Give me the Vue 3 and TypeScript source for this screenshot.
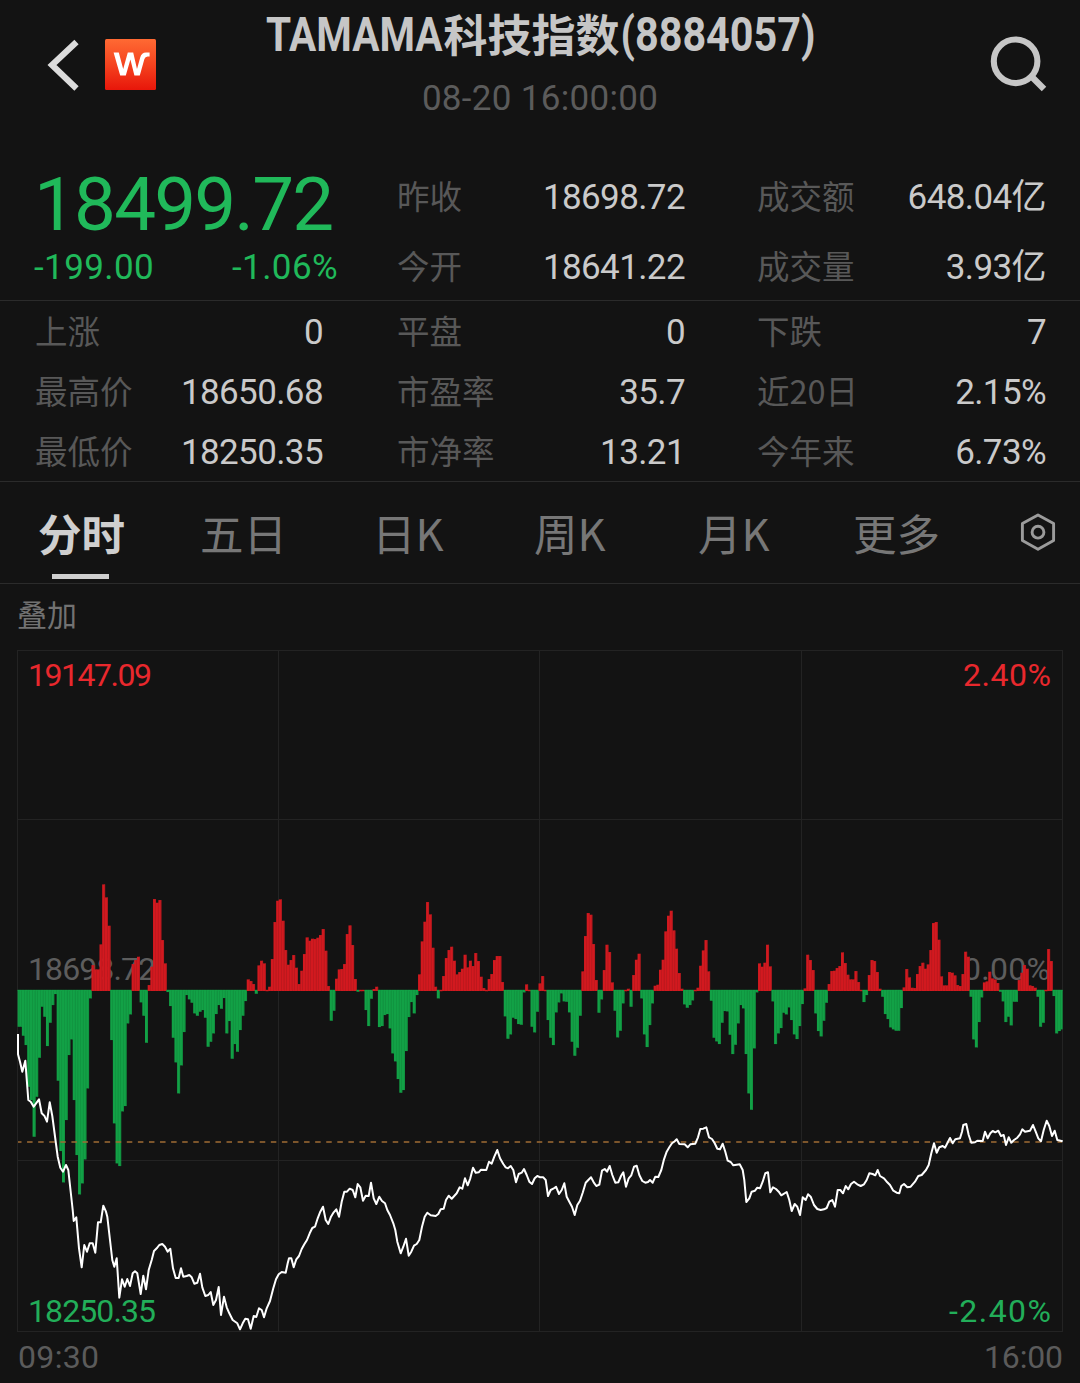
<script setup lang="ts">
interface Stat { label: string; value: string }
interface Bar { x: number; y: number; h: number; up: boolean }
interface Trace { x: number; y: number; pts: number[] }

const headStats: Stat[] = [
  { label: '昨收', value: '18698.72' },
  { label: '成交额', value: '648.04亿' },
  { label: '今开', value: '18641.22' },
  { label: '成交量', value: '3.93亿' },
]

const stats: Stat[] = [
  { label: '上涨', value: '0' },
  { label: '平盘', value: '0' },
  { label: '下跌', value: '7' },
  { label: '最高价', value: '18650.68' },
  { label: '市盈率', value: '35.7' },
  { label: '近20日', value: '2.15%' },
  { label: '最低价', value: '18250.35' },
  { label: '市净率', value: '13.21' },
  { label: '今年来', value: '6.73%' },
]

const tabs = ['分时', '五日', '日K', '周K', '月K', '更多']

// One level per minute, in thirds of a pixel, measured downwards from the given zero.
const levels: { zero: number; values: number[] }[] = [
  {
    zero: 361,
    values: [
      470, 470, 497, 525, 650, 690, 800, 680, 563, 410, 440, 528, 458, 405, 372, 632, 843, 937, 750, 555,
      508, 690, 855, 973, 940, 868, 655, 385, 285, 298, 298, 223, 43, 82, 167, 510, 760, 880, 888, 724,
      708, 460, 433, 282, 270, 260, 397, 437, 518, 345, 290, 87, 98, 90, 210, 280, 366, 408, 503, 577,
      670, 586, 486, 375, 388, 398, 430, 437, 425, 420, 443, 530, 515, 490, 432, 405, 416, 384, 490, 453,
      566, 522, 545, 480, 437, 393, 328, 333, 342, 371, 286, 272, 280, 361, 350, 267, 156, 92, 88, 152,
      240, 284, 270, 255, 293, 342, 302, 252, 202, 212, 206, 207, 203, 195, 177, 242, 348, 452, 422, 326,
      298, 297, 282, 192, 166, 225, 327, 365, 361, 361, 420, 468, 386, 357, 350, 471, 468, 435, 432, 475,
      550, 574, 627, 668, 660, 543, 441, 396, 430, 375, 313, 214, 155, 96, 133, 233, 350, 385, 361, 318,
      264, 240, 230, 272, 313, 306, 296, 254, 292, 272, 288, 249, 273, 320, 354, 361, 327, 312, 270, 258,
      258, 336, 439, 506, 493, 443, 447, 462, 464, 367, 343, 361, 470, 487, 425, 340, 318, 361, 450, 503,
      525, 427, 397, 370, 394, 395, 427, 515, 557, 533, 437, 304, 198, 129, 134, 222, 330, 428, 388, 300,
      224, 246, 337, 422, 502, 482, 400, 361, 356, 410, 315, 269, 251, 385, 493, 531, 465, 400, 347, 344,
      299, 269, 184, 137, 122, 181, 236, 309, 356, 403, 413, 405, 391, 361, 353, 287, 241, 210, 304, 392,
      503, 514, 522, 458, 423, 424, 494, 552, 524, 460, 405, 415, 552, 670, 719, 535, 367, 280, 290, 278,
      224, 289, 394, 522, 490, 474, 428, 433, 412, 450, 493, 507, 468, 402,
    ],
  },
  {
    zero: 271,
    values: [
      265, 164, 180, 210, 340, 393, 409, 362, 308, 252, 213, 212, 204, 198, 157, 189, 224, 238, 238, 213,
      246, 271, 306, 285, 225, 180, 183, 216, 266, 290, 342, 357, 382, 388, 392, 392, 324, 262, 207, 232,
      263, 264, 222, 198, 188, 206, 193, 150, 69, 66, 119, 229, 256, 256, 216, 218, 226, 255, 258, 222,
      155, 170, 290, 418, 442, 366, 292, 247, 244, 215, 235, 238, 249, 275, 304, 366, 350, 376, 305, 305,
      240, 218, 195, 206, 256, 258, 263, 290, 380, 368, 271, 147, 183, 288, 400, 393, 388,
    ],
  },
]

const PITCH = 2.677
const BASE = 990.4

const bars: Bar[] = levels
  .flatMap((part) => part.values.map((v) => (part.zero - v) / 3))
  .map((v, i) => ({
    x: 16.5 + PITCH * i,
    y: v >= 0 ? BASE - v : BASE,
    h: Math.max(Math.abs(v), 0.8),
    up: v >= 0,
  }))

const traces: Trace[] = [
  {
    x: 10, y: 870,
    pts: [24, 492, 24, 553, 30, 575, 37, 605, 46, 572, 55, 690, 62, 695, 71, 710, 87, 688, 95, 730, 103, 737, 111, 755, 119, 697, 127, 738, 138, 822, 143, 860, 151, 893, 159, 905, 168, 885, 175, 900],
  },
  {
    x: 10, y: 1180,
    pts: [188, 90, 191, 123, 199, 112, 207, 205, 215, 262, 223, 195, 231, 215, 239, 190, 248, 190, 256, 218, 264, 127, 272, 127, 280, 77, 288, 95, 292, 110, 300, 180, 307, 240, 313, 260, 320, 235, 328, 353, 336, 298, 344, 320, 352, 297, 360, 318, 368, 280, 375, 274, 382, 280, 392, 342, 400, 287, 408, 328, 416, 270, 425, 240, 432, 213, 440, 205, 448, 195, 457, 192, 465, 200, 473, 215, 481, 206, 489, 265, 497, 294, 506, 294, 513, 265, 520, 290, 530, 288, 538, 285, 545, 292, 553, 311, 562, 308, 570, 281, 577, 322, 586, 348, 595, 345, 602, 336, 610, 375, 618, 360, 626, 321, 633, 405, 642, 350, 650, 382, 658, 400, 668, 420, 682, 430, 690, 448, 698, 430, 706, 416, 714, 418, 722, 446, 731, 408, 739, 411, 747, 385, 755, 390, 762, 412, 770, 385, 780, 363, 790, 325, 798, 298, 806, 283, 815, 276, 827, 278, 833, 250],
  },
  {
    x: 270, y: 1100,
    pts: [57, 475, 64, 475, 71, 502, 79, 478, 87, 468, 95, 447, 103, 433, 111, 420, 119, 400, 127, 384, 135, 380, 143, 355, 151, 335, 159, 320, 167, 360, 175, 372, 183, 350, 191, 337, 199, 328, 207, 350, 215, 305, 223, 275, 231, 275, 239, 266, 248, 270, 256, 292, 263, 252, 271, 262, 279, 302, 287, 287, 296, 288, 303, 248, 311, 295, 319, 312, 328, 290, 336, 303, 345, 310, 352, 330, 360, 345, 370, 370, 376, 390, 382, 425, 392, 460, 400, 440, 408, 416, 416, 467, 424, 455, 432, 437, 440, 432, 448, 420, 456, 380, 464, 350, 472, 338, 482, 346, 497, 348, 505, 342, 512, 328, 521, 326, 528, 300, 536, 287, 545, 296, 560, 280, 569, 262, 577, 266, 585, 235, 593, 256, 601, 235, 609, 203, 617, 218, 626, 217, 633, 209, 649, 210, 657, 185, 665, 191, 673, 170, 682, 150, 690, 175, 700, 192, 707, 202, 714, 205, 722, 198, 730, 210, 738, 247, 746, 222, 755, 218, 762, 207, 770, 225, 778, 245, 786, 252, 794, 235, 802, 228, 811, 232, 820, 232, 827, 240],
  },
  {
    x: 540, y: 1100,
    pts: [24, 288, 32, 270, 40, 266, 48, 260, 57, 282, 65, 270, 73, 250, 80, 290, 88, 305, 96, 320, 104, 345, 112, 315, 120, 302, 128, 278, 137, 248, 145, 240, 153, 232, 161, 247, 169, 258, 178, 254, 186, 212, 194, 207, 201, 215, 209, 198, 217, 225, 226, 248, 235, 247, 243, 228, 250, 217, 258, 260, 266, 235, 274, 226, 282, 200, 290, 197, 298, 225, 307, 243, 316, 248, 324, 246, 330, 240, 338, 248, 346, 230, 355, 231, 364, 210, 372, 178, 380, 155, 388, 142, 396, 130, 404, 124, 410, 118, 418, 132, 434, 133, 443, 142, 451, 133, 466, 131, 474, 112, 481, 87, 490, 86, 499, 82, 507, 112, 516, 117, 524, 130, 532, 146, 540, 148, 548, 131, 556, 155, 563, 182, 572, 186, 580, 196, 590, 194, 599, 193, 608, 210, 613, 240, 619, 306, 628, 295, 635, 275, 645, 272, 652, 263, 660, 265, 668, 245, 676, 220, 684, 217, 691, 277, 699, 262, 708, 267, 716, 275, 724, 286, 740, 276, 748, 300, 755, 333, 764, 312, 772, 320, 780, 345, 788, 292, 797, 300, 804, 283, 812, 290, 822, 315, 832, 327],
  },
  {
    x: 800, y: 1100,
    pts: [62, 330, 72, 328, 80, 324, 88, 305, 97, 300, 105, 320, 113, 270, 121, 270, 129, 280, 137, 258, 145, 268, 153, 252, 162, 245, 172, 253, 182, 258, 192, 253, 200, 240, 208, 220, 218, 222, 226, 226, 233, 210, 240, 228, 252, 235, 262, 247, 270, 255, 280, 272, 290, 278, 298, 280, 304, 258, 312, 252, 322, 262, 332, 260, 345, 245, 355, 228, 365, 225, 378, 210, 386, 195, 394, 160, 402, 130, 410, 158, 418, 142, 428, 138, 435, 143, 442, 130, 450, 114, 458, 130, 466, 118, 480, 115, 486, 95, 490, 75, 499, 72, 506, 105, 514, 128, 525, 127, 532, 122, 548, 123, 555, 95, 563, 115, 571, 100, 578, 93, 586, 97, 595, 92, 603, 108, 611, 105, 618, 135, 626, 112, 634, 128, 642, 120, 652, 113, 660, 103, 667, 88, 675, 95, 690, 92, 699, 75, 707, 95, 715, 115, 723, 124, 731, 90, 740, 62, 748, 78, 756, 108, 764, 92, 772, 120, 788, 124],
  },
]

const linePoints = traces
  .flatMap((t) => {
    const out: string[] = []
    for (let i = 0; i < t.pts.length; i += 2) {
      out.push(`${(t.x + t.pts[i] / 3).toFixed(1)},${(t.y + t.pts[i + 1] / 3).toFixed(1)}`)
    }
    return out
  })
  .join(' ')
</script>

<template>
  <main class="screen">
    <header class="header">
      <div class="nav">
        <svg class="back" width="36" height="56" viewBox="0 0 36 56">
          <path d="M31.5 5 L7 28 L31.5 51.5" fill="none" stroke="#dcdcdc" stroke-width="6.2" />
        </svg>
        <svg class="logo" width="51" height="51" viewBox="0 0 51 51">
          <defs>
            <linearGradient id="logoFill" x1="0" y1="0" x2="0" y2="1">
              <stop offset="0" stop-color="#ff6a33" />
              <stop offset="0.5" stop-color="#f5431f" />
              <stop offset="1" stop-color="#e8160a" />
            </linearGradient>
          </defs>
          <rect width="51" height="51" rx="1.5" fill="url(#logoFill)" />
          <path d="M8.6 13.6 H13.8 L18.2 30 L22.8 13.6 H28.2 L32 30 L35.2 18.5 Q36.6 13.6 41 13.6 H44.6 V17.4 H42.6 Q40.2 17.4 39.4 20 L34.8 36.4 H29.4 L25.4 20.6 L20.8 36.4 H15.2 Z" fill="#fff" />
        </svg>
      </div>
      <div class="heading">
        <svg class="title" width="560" height="66" viewBox="260 0 560 66">
          <text class="latin" x="266" y="51" textLength="176.5" lengthAdjust="spacingAndGlyphs">TAMAMA</text>
          <text class="han" x="443.5" y="51.5" textLength="176" lengthAdjust="spacingAndGlyphs">科技指数</text>
          <text class="latin" x="620.5" y="51" textLength="195" lengthAdjust="spacingAndGlyphs">(8884057)</text>
        </svg>
        <div class="time">08-20 16:00:00</div>
      </div>
      <svg class="search" width="64" height="64" viewBox="986 32 64 64">
        <circle cx="1015.6" cy="61.3" r="21.8" fill="none" stroke="#c6c6c6" stroke-width="6.1" />
        <path d="M1031 76 L1044 89" stroke="#c6c6c6" stroke-width="6.4" />
      </svg>
    </header>

    <section class="summary">
      <div class="quote">
        <div class="price">18499.72</div>
        <div class="delta"><span>-199.00</span><span>-1.06%</span></div>
      </div>
      <div class="head-grid">
        <div v-for="s in headStats" :key="s.label" class="stat">
          <span class="label">{{ s.label }}</span><span class="value">{{ s.value }}</span>
        </div>
      </div>
    </section>

    <section class="stats">
      <div v-for="s in stats" :key="s.label" class="stat">
        <span class="label">{{ s.label }}</span><span class="value">{{ s.value }}</span>
      </div>
    </section>

    <nav class="tabs">
      <button v-for="(t, i) in tabs" :key="t" :class="['tab', { active: i === 0 }]">{{ t }}</button>
      <svg class="gear" width="40" height="44" viewBox="1018 511 40 44">
        <path d="M1038 515 L1053.6 523.6 V540.6 L1038 549.2 L1022.4 540.6 V523.6 Z" fill="none" stroke="#9b9b9b" stroke-width="2.9" stroke-linejoin="round" />
        <circle cx="1038" cy="532.2" r="5.9" fill="none" stroke="#9b9b9b" stroke-width="2.9" />
      </svg>
    </nav>

    <div class="overlay">叠加</div>

    <svg class="chart" width="1080" height="738" viewBox="0 645 1080 738">
      <defs>
        <clipPath id="plot"><rect x="17.6" y="650" width="1045" height="682" /></clipPath>
      </defs>
      <g class="grid">
        <path d="M18 650.5 H1062 M18 819.5 H1062 M18 990.5 H1062 M18 1160.5 H1062 M18 1331.5 H1062" />
        <path d="M17.5 650 V1332 M278.5 650 V1332 M539.5 650 V1332 M801.5 650 V1332 M1062.5 650 V1332" />
      </g>
      <text class="mute" x="28" y="980" textLength="128">18698.72</text>
      <text class="mute" x="963" y="980" textLength="87">0.00%</text>

      <g clip-path="url(#plot)">
        <g v-for="(b, i) in bars" :key="i" :class="b.up ? 'up' : 'down'">
          <rect class="body" :x="b.x" :y="b.y" :width="3" :height="b.h" />
          <rect class="edge" :x="b.x + 2.2" :y="b.y" :width="0.6" :height="b.h" />
          <rect class="body" :x="b.x" :y="989.8" :width="2.7" :height="1.2" />
        </g>
      </g>

      <path class="ref-line" d="M18 1142 H1062" />
      <polyline class="price-line" :points="linePoints" />

      <text class="red" x="28" y="685.5" textLength="124">19147.09</text>
      <text class="red" x="963" y="685.5" textLength="88">2.40%</text>
      <text class="green" x="28" y="1321.5" textLength="128">18250.35</text>
      <text class="green" x="949" y="1321.5" textLength="102">-2.40%</text>
      <text class="axis" x="18" y="1367.5" textLength="81">09:30</text>
      <text class="axis" x="984" y="1367.5" textLength="79">16:00</text>
    </svg>
  </main>
</template>

<style>
body {
  background: #131313;
}
</style>

<style scoped>
.screen {
  width: 1080px;
  height: 1383px;
  overflow: hidden;
  background: #131313;
  color: #cacaca;
  font-family: Roboto, "Noto Sans CJK SC", sans-serif;
  font-size: 35px;
  display: flex;
  flex-direction: column;
}
.header {
  height: 161px;
  display: flex;
  align-items: flex-start;
  flex: none;
}
.nav {
  width: 260px;
  display: flex;
  padding: 37px 0 0 45px;
  box-sizing: border-box;
}
.logo {
  margin: 2px 0 0 24px;
}
.heading {
  width: 560px;
  display: flex;
  flex-direction: column;
  align-items: center;
}
.title {
  overflow: visible;
}
.title text {
  font-weight: 700;
  fill: #c6c6c6;
}
.title .latin {
  font-size: 47.5px;
}
.title .han {
  font-family: "Noto Sans CJK SC", sans-serif;
  font-size: 44px;
}
.time {
  height: 64px;
  line-height: 66px;
  color: #5b5b5b;
  letter-spacing: 0.3px;
}
.search {
  margin: 32px 0 0 166px;
}
.summary {
  height: 139px;
  flex: none;
  display: flex;
  border-bottom: 1px solid #2b2b2b;
}
.quote {
  width: 397px;
  box-sizing: border-box;
  padding: 0 59px 0 34px;
  color: #20b95a;
}
.price {
  height: 86px;
  line-height: 87px;
  font-size: 74.5px;
  letter-spacing: -1.8px;
}
.delta {
  display: flex;
  justify-content: space-between;
  height: 40px;
  line-height: 42px;
  letter-spacing: 0.4px;
}
.head-grid {
  display: grid;
  grid-template-columns: 288px 289px;
  grid-template-rows: 70px 70px;
  column-gap: 72px;
}
.stat {
  display: flex;
  justify-content: space-between;
  align-items: center;
  white-space: nowrap;
}
.label {
  font-family: "Noto Sans CJK SC", sans-serif;
  font-size: 32.5px;
  line-height: 40px;
  margin-top: -3px;
  font-weight: 400;
  color: #585858;
}
.value {
  line-height: 40px;
  margin-top: 3px;
  letter-spacing: -0.6px;
}
.stats {
  height: 180px;
  flex: none;
  box-sizing: content-box;
  padding-left: 35px;
  display: grid;
  grid-template-columns: 362px 360px 289px;
  grid-template-rows: 60px 60px 60px;
  border-bottom: 1px solid #2b2b2b;
}
.stats .stat:nth-child(3n + 1) {
  padding-right: 74px;
}
.stats .stat:nth-child(3n + 2) {
  padding-right: 72px;
}
.tabs {
  height: 101px;
  flex: none;
  display: flex;
  align-items: center;
  padding-left: 38px;
  border-bottom: 1px solid #2b2b2b;
}
.tab {
  position: relative;
  height: 101px;
  margin: 0;
  padding: 0;
  border: 0;
  background: none;
  text-align: left;
  color: #777;
  font: 400 43.5px/96px "Noto Sans CJK SC", sans-serif;
  width: 162px;
  white-space: nowrap;
}
.tab:nth-child(2) {
  width: 172px;
}
.tab:nth-child(4) {
  width: 164px;
}
.tab:nth-child(5) {
  width: 155px;
}
.tab:nth-child(6) {
  width: 165px;
}
.tab.active {
  color: #cfcfcf;
  font-weight: 700;
}
.tab.active::after {
  content: "";
  position: absolute;
  left: 14px;
  bottom: 4px;
  width: 57px;
  height: 5.5px;
  background: #cfcfcf;
}
.overlay {
  height: 61px;
  flex: none;
  padding-left: 17px;
  font: 400 30px/59px "Noto Sans CJK SC", sans-serif;
  color: #727272;
}
.chart {
  display: block;
  flex: none;
}
.chart text {
  font-size: 32px;
}
.grid path {
  fill: none;
  stroke: #232323;
  stroke-width: 1;
}
.mute {
  fill: #5d5d5d;
}
.axis {
  fill: #5b5b5b;
}
.red {
  fill: #e8282d;
}
.green {
  fill: #22ae59;
}
.up .edge {
  fill: #a81a1f;
}
.up .body {
  fill: #d2191f;
}
.down .edge {
  fill: #118a3c;
}
.down .body {
  fill: #12a146;
}
.ref-line {
  stroke: #a06c35;
  stroke-width: 1.4;
  stroke-dasharray: 5.5 5.58;
  stroke-dashoffset: 2;
}
.price-line {
  fill: none;
  stroke: #fff;
  stroke-width: 2;
  stroke-linejoin: round;
}
</style>
